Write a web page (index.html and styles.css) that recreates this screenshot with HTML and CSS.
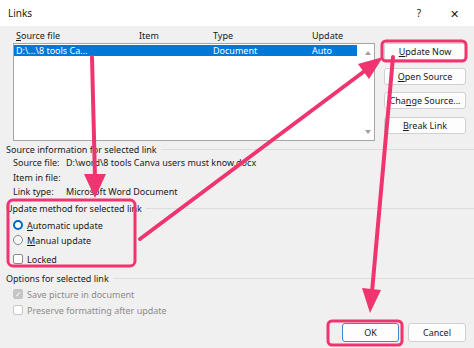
FILE: index.html
```html
<!DOCTYPE html>
<html lang="en">
<head>
    <meta charset="UTF-8">
    <meta name="viewport" content="width=device-width, initial-scale=1.0">
    <title>Links</title>
    <link rel="stylesheet" href="styles.css">
</head>
<body>
    <div class="titlebar">
        <span class="title">Links</span>
        <span class="help">?</span>
        <span class="close">✕</span>
    </div>

    <div class="top">
        <div class="list-col">
            <div class="headers">
                <span><u>S</u>ource file</span>
                <span>Item</span>
                <span>Type</span>
                <span>Update</span>
            </div>
            <div class="listbox">
                <div class="rows">
                    <div class="row selected">
                        <span>D:\...\8 tools Ca...</span>
                        <span></span>
                        <span>Document</span>
                        <span>Auto</span>
                    </div>
                </div>
                <div class="scrollbar">
                    <span class="arrow up"></span>
                    <span class="arrow down"></span>
                </div>
            </div>
        </div>
        <div class="buttons">
            <button><u>U</u>pdate Now</button>
            <button><u>O</u>pen Source</button>
            <button>Cha<u>n</u>ge Source...</button>
            <button><u>B</u>reak Link</button>
        </div>
    </div>

    <div class="group-title"><span>Source information for selected link</span></div>
    <div class="info">
        <div class="info-row"><span class="info-label">Source file:</span><span>D:\word\8 tools Canva users must know.docx</span></div>
        <div class="info-row"><span class="info-label">Item in file:</span><span></span></div>
        <div class="info-row"><span class="info-label">Link type:</span><span>Microsoft Word Document</span></div>
    </div>

    <div class="group-title method"><span>Update method for selected link</span></div>
    <div class="choices">
        <div class="choice"><span class="radio checked"></span><span><u>A</u>utomatic update</span></div>
        <div class="choice"><span class="radio"></span><span><u>M</u>anual update</span></div>
        <div class="choice locked"><span class="check"></span><span>Locked</span></div>
    </div>

    <div class="group-title options-title"><span>Options for selected link</span></div>
    <div class="choices disabled">
        <div class="choice tall"><span class="check on">✓</span><span>Save picture in document</span></div>
        <div class="choice tall"><span class="check"></span><span>Preserve formatting after update</span></div>
    </div>

    <div class="footer">
        <button class="ok">OK</button>
        <button class="cancel">Cancel</button>
    </div>

    <!-- annotations drawn over the dialog -->
    <svg class="marks" width="474" height="348" viewBox="0 0 474 348">
        <g fill="none" stroke="#ef3470" stroke-width="3">
            <rect x="382" y="41" width="84" height="20" rx="4"/>
            <rect x="8" y="200" width="127" height="66" rx="5"/>
            <rect x="328" y="321" width="74" height="24" rx="4"/>
        </g>
        <g stroke="#ef3470" stroke-width="4" stroke-linecap="round">
            <line x1="92" y1="57" x2="95" y2="178"/>
            <line x1="140" y1="239" x2="366" y2="70"/>
            <line x1="393" y1="57" x2="372" y2="292"/>
        </g>
        <g fill="#ef3470">
            <polygon points="84,174 106,174 95,198"/>
            <polygon points="383,57 369,79 358,64"/>
            <polygon points="381,290 362,288 370,313"/>
        </g>
    </svg>
</body>
</html>
```

FILE: styles.css
```css
body {
    margin: 0;
    width: 474px;
    height: 348px;
    overflow: hidden;
    position: relative;
    background: #f0f0f0;
    font-family: "Noto Sans", "Open Sans", sans-serif;
    font-size: 9px;
    color: #1a1a1a;
}
u {
    text-decoration-thickness: 1px;
    text-underline-offset: 1px;
}
.titlebar {
    height: 26px;
    background: #fff;
    display: flex;
    align-items: center;
    padding: 0 5px 0 8px;
}
.title {
    flex: 1;
    font-size: 10px;
}
.help {
    width: 20px;
    text-align: center;
    font-size: 10px;
    margin-right: 10px;
}
.close {
    width: 30px;
    text-align: center;
    font-size: 11px;
}
.top {
    display: flex;
    padding-left: 13px;
}
.list-col {
    width: 362px;
}
.headers,
.row {
    display: grid;
    grid-template-columns: 123px 74px 99px auto;
}
.headers {
    height: 17px;
    box-sizing: border-box;
    padding: 3px 0 0 3px;
    line-height: 14px;
}
.listbox {
    height: 98px;
    box-sizing: border-box;
    border: 1px solid #a6a6a6;
    background: #fff;
    display: flex;
}
.rows {
    flex: 1;
    padding: 1px 4px 0 0;
}
.row {
    height: 11px;
    line-height: 11px;
    padding-left: 2px;
}
.row.selected {
    background: #0078d7;
    color: #fff;
}
.scrollbar {
    width: 13px;
    display: flex;
    flex-direction: column;
    justify-content: space-between;
    align-items: center;
    padding: 7px 0 6px;
}
.arrow {
    width: 0;
    height: 0;
    border-left: 3.5px solid transparent;
    border-right: 3.5px solid transparent;
}
.arrow.up {
    border-bottom: 4px solid #a0a0a0;
}
.arrow.down {
    border-top: 4px solid #a0a0a0;
}
.buttons {
    margin-left: 9px;
    padding-top: 17px;
    width: 82px;
    display: flex;
    flex-direction: column;
    gap: 7.5px;
}
button {
    height: 17px;
    padding: 0;
    font: inherit;
    color: #1a1a1a;
    background: #fdfdfd;
    border: 1px solid #d0d0d0;
    border-radius: 3px;
}
.group-title {
    display: flex;
    align-items: center;
    height: 14px;
    margin-top: 1px;
    padding-left: 6px;
    white-space: nowrap;
}
.group-title::after {
    content: "";
    flex: 1;
    height: 1px;
    margin-left: 4px;
    background: #dcdcdc;
}
.info {
    padding-left: 13px;
}
.info-row {
    display: flex;
    height: 14.5px;
    line-height: 14.5px;
    white-space: nowrap;
}
.info-label {
    width: 53px;
}
.group-title.method {
    margin-top: 1.5px;
}
.choices {
    padding-left: 13px;
    margin-top: 2.5px;
}
.choice {
    display: flex;
    align-items: center;
    gap: 4px;
    height: 15px;
}
.choice.locked {
    margin-top: 4px;
}
.choice.tall {
    height: 16px;
}
.radio {
    box-sizing: border-box;
    width: 10px;
    height: 10px;
    border-radius: 50%;
    border: 1px solid #8a8a8a;
    background: #f7f7f7;
}
.radio.checked {
    border: 2.5px solid #0067c0;
    background: #fff;
}
.check {
    box-sizing: border-box;
    width: 10px;
    height: 10px;
    border: 1px solid #8a8a8a;
    border-radius: 2px;
    background: #fff;
    font-size: 8px;
    line-height: 8px;
    text-align: center;
    color: #fff;
}
.group-title.options-title {
    margin-top: 4.5px;
}
.choices.disabled {
    margin-top: 1px;
    color: #8c8c8c;
}
.disabled .check {
    border-color: #c8c8c8;
}
.disabled .check.on {
    background: #c5c5c5;
    border-color: #c5c5c5;
}
.footer {
    margin-top: 5px;
    display: flex;
    justify-content: flex-end;
    gap: 9px;
    padding-right: 8px;
}
.footer button {
    height: 19px;
}
.ok {
    width: 57px;
    border-color: #3f86d3;
}
.cancel {
    width: 58px;
}
.marks {
    position: absolute;
    top: 0;
    left: 0;
    pointer-events: none;
}
```
